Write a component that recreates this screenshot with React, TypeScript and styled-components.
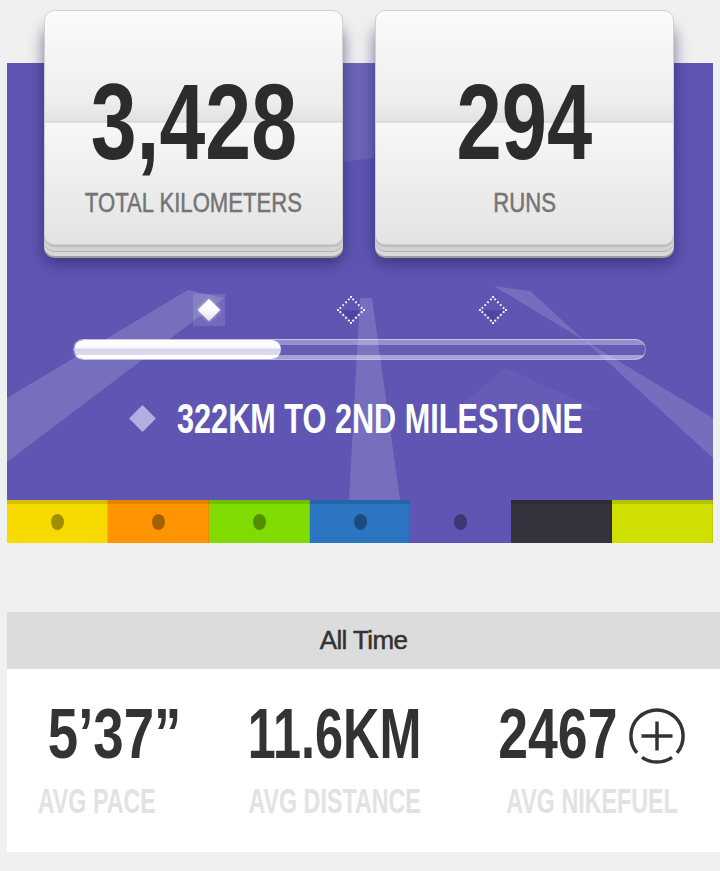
import styled, { createGlobalStyle } from 'styled-components';

const GlobalStyle = createGlobalStyle`
  * { box-sizing: border-box; }
  html, body { margin: 0; padding: 0; background: #eff1f0; }
  body { font-family: "Liberation Sans", Arial, sans-serif; }
`;

// no condensed face is installed, so the sans is squeezed with scaleX where needed
const SANS = `"Liberation Sans", Arial, sans-serif`;
const PURPLE = '#5f56b3';

const Page = styled.div`
  width: 720px;
  min-height: 871px;
  background: #eff1f0;
  overflow: hidden;
`;

const Hero = styled.section`
  position: relative;
  margin-left: 7px;
  width: 706px;
  padding-top: 10px;
  display: flex;
  flex-direction: column;
  background: linear-gradient(to bottom, transparent 63px, ${PURPLE} 63px);
`;

const Rays = styled.svg`
  position: absolute;
  top: 0;
  left: 0;
  pointer-events: none;
`;

const Layer = styled.div`
  position: relative;
  z-index: 1;
`;

const CardRow = styled(Layer)`
  display: flex;
  gap: 32px;
  padding-left: 37px;
`;

const Card = styled.div`
  width: 299px;
  height: 235px;
  border-radius: 10px;
  border: 1px solid #d0d0d0;
  display: flex;
  flex-direction: column;
  align-items: center;
  padding-top: 58px;
  background: linear-gradient(
    to bottom,
    #fbfbfb 0,
    #eeeeee 90px,
    #e2e2e2 110px,
    #cdcdcd 111px,
    #f7f7f7 112px,
    #ececec 180px,
    #e3e3e3 100%
  );
  box-shadow:
    0 2px 0 #bdbdbd,
    0 6px 0 #d3d3d3,
    0 7px 0 #b2b2b2,
    0 11px 0 #d9d9d9,
    0 13px 0 #9d9d9d,
    0 18px 16px rgba(35, 25, 90, 0.6);
`;

const Squeeze = styled.span<{ $sx: number; $origin?: string }>`
  display: inline-block;
  transform: scaleX(${p => p.$sx});
  transform-origin: ${p => p.$origin ?? 'center'};
  white-space: nowrap;
`;

const CardValue = styled.div`
  font-family: ${SANS};
  font-weight: 700;
  font-size: 107px;
  line-height: 1;
  color: #2c2c2c;
`;

const CardLabel = styled.div`
  margin-top: 13px;
  font-family: ${SANS};
  font-size: 28px;
  line-height: 1;
  color: #747474;
  -webkit-text-stroke: 0.5px #747474;
`;

const Milestones = styled(Layer)`
  display: flex;
  gap: 110px;
  padding-left: 186px;
  margin-top: 49px;
`;

const MilestoneSlot = styled.div<{ $reached?: boolean }>`
  width: 32px;
  height: 32px;
  display: flex;
  align-items: center;
  justify-content: center;
  background: ${p => (p.$reached ? 'rgba(255,255,255,0.12)' : 'transparent')};
`;

const Gem = styled.span<{ $reached?: boolean }>`
  display: block;
  width: ${p => (p.$reached ? 16 : 20)}px;
  height: ${p => (p.$reached ? 16 : 20)}px;
  transform: rotate(45deg);
  ${p =>
    p.$reached
      ? `background: linear-gradient(to bottom right, #ffffff 40%, #e4e2f2 100%);
         box-shadow: 0 0 4px rgba(255,255,255,0.5);`
      : `border: 2px dotted rgba(255,255,255,0.9);
         background: linear-gradient(to bottom right, transparent 50%, rgba(40,30,120,0.3) 50%);`}
`;

const Track = styled(Layer)`
  margin: 13px 0 0 66px;
  width: 573px;
  height: 21px;
  border-radius: 11px;
  border: 1px solid rgba(255, 255, 255, 0.35);
  overflow: hidden;
  background: linear-gradient(
    to bottom,
    rgba(255, 255, 255, 0.35) 0,
    rgba(255, 255, 255, 0.35) 5px,
    rgba(255, 255, 255, 0.04) 5px,
    rgba(255, 255, 255, 0.04) 15px,
    rgba(255, 255, 255, 0.45) 15px
  );
`;

const Fill = styled.div`
  height: 100%;
  border-radius: 10px;
  background: linear-gradient(
    to bottom,
    #ffffff 0,
    #fbfbfe 40%,
    #d6d3ec 50%,
    #dedbf0 78%,
    #ffffff 80%
  );
`;

const MilestoneNote = styled(Layer)`
  display: flex;
  align-items: center;
  gap: 21px;
  padding-left: 122px;
  margin-top: 37px;
  height: 43px;
`;

const NoteGem = styled.span`
  flex: none;
  display: block;
  width: 19px;
  height: 19px;
  margin: 0 4px;
  transform: rotate(45deg);
  background: #b4ade1;
`;

const NoteText = styled.div`
  flex: none;
  font-family: ${SANS};
  font-weight: 700;
  font-size: 43px;
  line-height: 1;
  color: #ffffff;
`;

const Strip = styled(Layer)`
  display: flex;
  height: 43px;
  margin-top: 60px;
`;

const Swatch = styled.div<{ $color: string; $flat?: boolean }>`
  flex: 1;
  display: flex;
  align-items: center;
  justify-content: center;
  background: ${p => p.$color};
  box-shadow: ${p => (p.$flat ? 'none' : 'inset 0 4px 0 rgba(0,0,0,0.12), inset -1px 0 0 rgba(0,0,0,0.08)')};
`;

const Dot = styled.span`
  width: 13px;
  height: 16px;
  border-radius: 50%;
  background: rgba(0, 0, 0, 0.35);
`;

const Header = styled.div`
  margin: 69px 0 0 7px;
  height: 57px;
  line-height: 57px;
  background: #dcdcdc;
  text-align: center;
  font-family: ${SANS};
  font-size: 26px;
  letter-spacing: -0.6px;
  color: #333333;
  -webkit-text-stroke: 0.5px #333333;
`;

const StatsPanel = styled.div`
  margin-left: 7px;
  height: 183px;
  background: #ffffff;
  display: grid;
  grid-template-columns: 180px 296px 218px;
  padding-top: 30px;
`;

const StatCol = styled.div`
  display: flex;
  flex-direction: column;
  align-items: center;
`;

const StatValue = styled.div<{ $shift?: number }>`
  display: flex;
  align-items: center;
  height: 70px;
  font-family: ${SANS};
  font-weight: 700;
  font-size: 70px;
  line-height: 1;
  color: #333333;
  transform: translateX(${p => p.$shift ?? 0}px);
`;

const FuelMark = styled.svg`
  flex: none;
  margin-left: -7px;
  margin-top: 4px;
`;

const StatLabel = styled.div`
  margin-top: 14px;
  font-family: ${SANS};
  font-weight: 700;
  font-size: 35px;
  line-height: 1;
  color: #e2e2e2;
`;

function FuelIcon() {
  return (
    <FuelMark width="58" height="58" viewBox="0 0 60 60" fill="none" stroke="#333" strokeWidth="3.6">
      <path d="M9.3 47.4 A27 27 0 1 1 50.7 47.4" />
      <path d="M45.5 52.1 A27 27 0 0 1 14.5 52.1" />
      <path d="M14 30 H46 M30 15 V45" />
    </FuelMark>
  );
}

const swatches = [
  { color: '#f6da00', dot: true },
  { color: '#fe9500', dot: true },
  { color: '#7fdb00', dot: true },
  { color: '#2b75c3', dot: true },
  { color: PURPLE, dot: true, flat: true },
  { color: '#34323c' },
  { color: '#cfdf00' },
];

const stats = [
  { value: '5’37”', label: 'AVG PACE', shift: 18, sx: 0.78 },
  { value: '11.6KM', label: 'AVG DISTANCE', sx: 0.72 },
  { value: '2467', label: 'AVG NIKEFUEL', shift: -9, sx: 0.765, fuel: true },
];

export default function App() {
  const progress = 208 / 573;

  return (
    <Page>
      <GlobalStyle />
      <Hero>
        <Rays width="706" height="543" viewBox="7 0 706 543">
          <g fill="#ffffff">
            <polygon points="188,290 224,298 7,462 7,398" opacity="0.15" />
            <polygon points="494,286 530,291 713,458 713,418" opacity="0.14" />
            <polygon points="360,298 372,298 400,500 349,500" opacity="0.15" />
            <polygon points="343,63 382,63 374,158 343,162" opacity="0.09" />
            <polygon points="455,410 505,368 600,410" opacity="0.04" />
          </g>
        </Rays>

        <CardRow>
          <Card>
            <CardValue>
              <Squeeze $sx={0.77}>3,428</Squeeze>
            </CardValue>
            <CardLabel>
              <Squeeze $sx={0.79}>TOTAL KILOMETERS</Squeeze>
            </CardLabel>
          </Card>
          <Card>
            <CardValue>
              <Squeeze $sx={0.76}>294</Squeeze>
            </CardValue>
            <CardLabel>
              <Squeeze $sx={0.79}>RUNS</Squeeze>
            </CardLabel>
          </Card>
        </CardRow>

        <Milestones>
          <MilestoneSlot $reached>
            <Gem $reached />
          </MilestoneSlot>
          <MilestoneSlot>
            <Gem />
          </MilestoneSlot>
          <MilestoneSlot>
            <Gem />
          </MilestoneSlot>
        </Milestones>

        <Track>
          <Fill style={{ width: `${progress * 100}%` }} />
        </Track>

        <MilestoneNote>
          <NoteGem />
          <NoteText>
            <Squeeze $sx={0.713} $origin="left">322KM TO 2ND MILESTONE</Squeeze>
          </NoteText>
        </MilestoneNote>

        <Strip>
          {swatches.map((s, i) => (
            <Swatch key={i} $color={s.color} $flat={s.flat}>
              {s.dot && <Dot />}
            </Swatch>
          ))}
        </Strip>
      </Hero>

      <Header>All Time</Header>

      <StatsPanel>
        {stats.map(s => (
          <StatCol key={s.label}>
            <StatValue $shift={s.shift}>
              <Squeeze $sx={s.sx}>{s.value}</Squeeze>
              {s.fuel && <FuelIcon />}
            </StatValue>
            <StatLabel>
              <Squeeze $sx={0.665}>{s.label}</Squeeze>
            </StatLabel>
          </StatCol>
        ))}
      </StatsPanel>
    </Page>
  );
}
